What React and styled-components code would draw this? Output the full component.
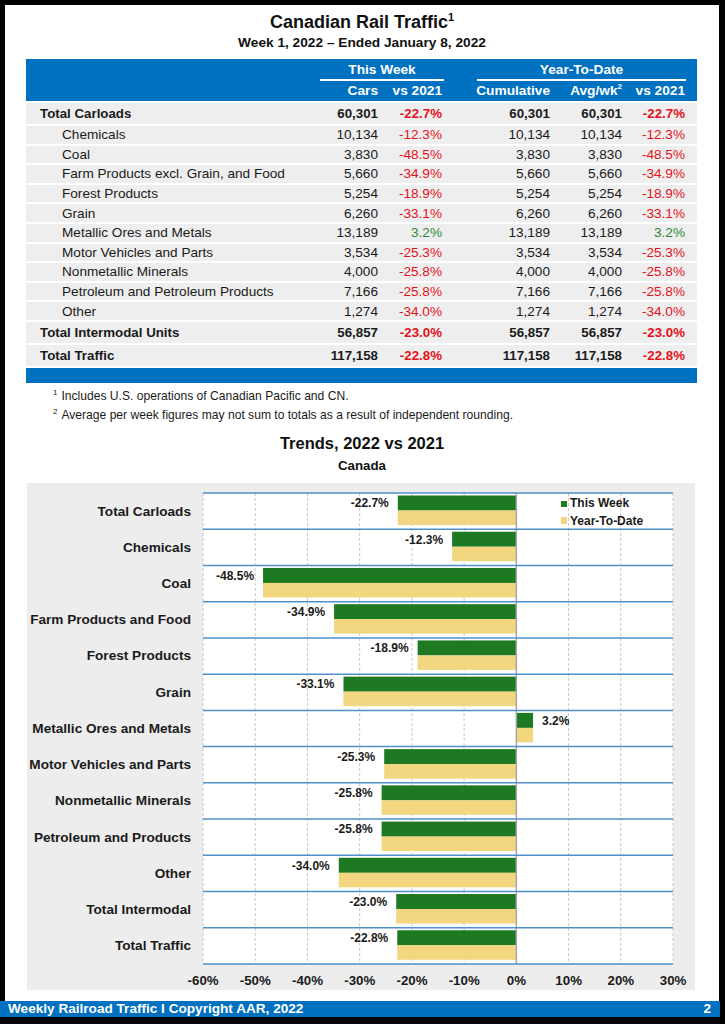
import styled, { createGlobalStyle } from 'styled-components'

const FONT = `"Liberation Sans", Arial, Helvetica, sans-serif`
const BLUE = '#0070c0'
const RED = '#e3121b'
const GREEN_TXT = '#2e8b3a'
const BAR_GREEN = '#1d7a22'
const BAR_YELLOW = '#f2d680'
const COLS = '292px 60px 64px 28px 80px 72px 63px 12px'

const GlobalStyle = createGlobalStyle`
  *, *::before, *::after { box-sizing: border-box; }
  html, body { margin: 0; padding: 0; background: #000; }
  body { font-family: ${FONT}; color: #1a1a1a; }
`

const Page = styled.div`
  width: 725px;
  height: 1024px;
  background: #000;
  padding-top: 5px;
  display: flex;
  flex-direction: column;
`

const Sheet = styled.div`
  flex: 1;
  margin: 0 6px 0 5px;
  background: #fff;
  padding-top: 7px;
  display: flex;
  flex-direction: column;
`

const Title = styled.h1`
  margin: 0;
  font-size: 18px;
  line-height: 20px;
  font-weight: 700;
  text-align: center;
  color: #111;

  sup {
    font-size: 11px;
    line-height: 0;
    vertical-align: 7px;
  }
`

const Subtitle = styled.h2`
  margin: 3px 0 0;
  font-size: 13.7px;
  line-height: 16px;
  font-weight: 700;
  text-align: center;
  color: #111;
`

const Table = styled.div`
  margin: 8px 0 0 21px;
  width: 671px;
  display: flex;
  flex-direction: column;
  gap: 2px;
`

const TableHead = styled.div`
  background: ${BLUE};
  color: #fff;
  height: 42px;
  padding-top: 2px;
  display: grid;
  grid-template-columns: ${COLS};
  grid-template-rows: 20px 20px;
  font-size: 13.7px;
  font-weight: 700;

  sup {
    font-size: 8px;
    line-height: 0;
    vertical-align: 6px;
  }
`

const GroupHead = styled.div`
  grid-row: 1;
  grid-column: ${p => p.$span};
  margin: ${p => p.$inset};
  text-align: center;
  line-height: 18px;
  border-bottom: 2px solid #fff;
`

const ColHead = styled.div`
  grid-row: 2;
  grid-column: ${p => p.$col};
  text-align: right;
  line-height: 20px;
  white-space: nowrap;
`

const Row = styled.div`
  height: ${p => (p.$total ? '21px' : '17.6px')};
  background: #eeeeee;
  display: grid;
  grid-template-columns: ${COLS};
  align-items: center;
  font-size: ${p => (p.$total ? '13.3px' : '13.6px')};
  font-weight: ${p => (p.$total ? 700 : 400)};
  white-space: nowrap;
`

const Label = styled.div`
  padding-left: ${p => (p.$total ? '14px' : '36px')};
`

const Num = styled.div`
  grid-column: ${p => p.$col};
  text-align: right;
`

const Pct = styled(Num)`
  color: ${p => (p.$neg ? RED : GREEN_TXT)};
`

const TableFoot = styled.div`
  height: 15px;
  background: ${BLUE};
`

const Notes = styled.div`
  margin-top: 4px;
  padding-left: 48px;
  font-size: 12.1px;
  line-height: 19px;
  color: #1a1a1a;

  sup {
    font-size: 8px;
    line-height: 0;
    vertical-align: 5px;
    margin-right: 4px;
  }
`

const ChartTitle = styled.h2`
  margin: 8px 0 0;
  font-size: 16.5px;
  line-height: 20px;
  font-weight: 700;
  text-align: center;
  color: #111;
`

const ChartSub = styled.h3`
  margin: 5px 0 0;
  font-size: 13.3px;
  line-height: 16px;
  font-weight: 700;
  text-align: center;
  color: #111;
`

const ChartBox = styled.div`
  margin: 9px 0 0 22px;
  width: 668px;
  height: 507px;
  background: #ededed;
  padding-top: 10px;
`

const ChartBody = styled.div`
  display: grid;
  grid-template-columns: 176px 470px;
`

const CatList = styled.div`
  height: 471px;
  display: grid;
  grid-template-rows: repeat(13, 1fr);
`

const Cat = styled.div`
  display: flex;
  align-items: center;
  justify-content: flex-end;
  padding-right: 12px;
  font-size: 13.6px;
  font-weight: 700;
  white-space: nowrap;
  color: #1a1a1a;
`

const Plot = styled.svg`
  display: block;
  overflow: visible;

  text {
    font-family: ${FONT};
    font-weight: 700;
    font-size: 12px;
    fill: #1a1a1a;
  }
`

const Ticks = styled.div`
  margin: 8px 0 0 150px;
  display: grid;
  grid-template-columns: repeat(10, 52.222px);
`

const Tick = styled.div`
  text-align: center;
  font-size: 13.3px;
  line-height: 18px;
  font-weight: 700;
  color: #1a1a1a;
`

const Footer = styled.div`
  height: 16px;
  margin: 0 5px 7px 0;
  background: ${BLUE};
  color: #fff;
  display: flex;
  justify-content: space-between;
  align-items: center;
  padding: 0 9px 0 8px;
  font-size: 13.6px;
  line-height: 16px;
  font-weight: 700;
`

const rows = [
  { label: 'Total Carloads', total: true, cars: '60,301', pct: '-22.7%' },
  { label: 'Chemicals', cars: '10,134', pct: '-12.3%' },
  { label: 'Coal', cars: '3,830', pct: '-48.5%' },
  { label: 'Farm Products excl. Grain, and Food', cars: '5,660', pct: '-34.9%' },
  { label: 'Forest Products', cars: '5,254', pct: '-18.9%' },
  { label: 'Grain', cars: '6,260', pct: '-33.1%' },
  { label: 'Metallic Ores and Metals', cars: '13,189', pct: '3.2%' },
  { label: 'Motor Vehicles and Parts', cars: '3,534', pct: '-25.3%' },
  { label: 'Nonmetallic Minerals', cars: '4,000', pct: '-25.8%' },
  { label: 'Petroleum and Petroleum Products', cars: '7,166', pct: '-25.8%' },
  { label: 'Other', cars: '1,274', pct: '-34.0%' },
  { label: 'Total Intermodal Units', total: true, cars: '56,857', pct: '-23.0%' },
  { label: 'Total Traffic', total: true, cars: '117,158', pct: '-22.8%' },
]

const trends = [
  ['Total Carloads', -22.7],
  ['Chemicals', -12.3],
  ['Coal', -48.5],
  ['Farm Products and Food', -34.9],
  ['Forest Products', -18.9],
  ['Grain', -33.1],
  ['Metallic Ores and Metals', 3.2],
  ['Motor Vehicles and Parts', -25.3],
  ['Nonmetallic Minerals', -25.8],
  ['Petroleum and Products', -25.8],
  ['Other', -34.0],
  ['Total Intermodal', -23.0],
  ['Total Traffic', -22.8],
]

const W = 470
const H = 471
const BH = H / 13
const ticks = [-60, -50, -40, -30, -20, -10, 0, 10, 20, 30]
const xOf = v => ((v + 60) * W) / 90

function TrendPlot() {
  const zero = xOf(0)
  return (
    <Plot width={W} height={H}>
      <rect width={W} height={H} fill="#fff" />
      {ticks.filter(t => t !== 0).map(t => (
        <line key={t} x1={xOf(t)} x2={xOf(t)} y1={0} y2={H} stroke="#c8c8c8" strokeDasharray="3 2" />
      ))}
      {trends.map(([name, v], i) => {
        const top = i * BH
        const x = Math.min(zero, xOf(v))
        const w = Math.abs(xOf(v) - zero)
        return (
          <g key={name}>
            <rect x={x} y={top + 2.5} width={w} height={15} fill={BAR_GREEN} />
            <rect x={x} y={top + 17.5} width={w} height={14.5} fill={BAR_YELLOW} />
          </g>
        )
      })}
      <line x1={zero} x2={zero} y1={0} y2={H} stroke="#a6a6a6" strokeWidth={1.5} />
      {Array.from({ length: 14 }, (_, i) => (
        <line key={i} x1={0} x2={W} y1={i * BH} y2={i * BH} stroke="#4f8fcc" strokeWidth={1.5} />
      ))}
      {trends.map(([name, v], i) => {
        const top = i * BH
        const neg = v < 0
        return (
          <text
            key={name}
            x={neg ? xOf(v) - 9 : xOf(v) + 9}
            y={top + 14.3}
            textAnchor={neg ? 'end' : 'start'}
          >
            {v.toFixed(1)}%
          </text>
        )
      })}
      <rect x={358} y={8} width={6} height={6} fill={BAR_GREEN} />
      <text x={367} y={14.3}>This Week</text>
      <rect x={358} y={24} width={6} height={7} fill={BAR_YELLOW} />
      <text x={367} y={32}>Year-To-Date</text>
    </Plot>
  )
}

export default function App() {
  return (
    <Page>
      <GlobalStyle />
      <Sheet>
        <Title>Canadian Rail Traffic<sup>1</sup></Title>
        <Subtitle>Week 1, 2022 – Ended January 8, 2022</Subtitle>

        <Table>
          <TableHead>
            <GroupHead $span="2 / 4" $inset="0 -2px 0 2px">This Week</GroupHead>
            <GroupHead $span="5 / 8" $inset="0 -1px 0 7px">Year-To-Date</GroupHead>
            <ColHead $col={2}>Cars</ColHead>
            <ColHead $col={3}>vs 2021</ColHead>
            <ColHead $col={5}>Cumulative</ColHead>
            <ColHead $col={6}>Avg/wk<sup>2</sup></ColHead>
            <ColHead $col={7}>vs 2021</ColHead>
          </TableHead>
          {rows.map(r => {
            const neg = r.pct.startsWith('-')
            return (
              <Row key={r.label} $total={r.total}>
                <Label $total={r.total}>{r.label}</Label>
                <Num $col={2}>{r.cars}</Num>
                <Pct $col={3} $neg={neg}>{r.pct}</Pct>
                <Num $col={5}>{r.cars}</Num>
                <Num $col={6}>{r.cars}</Num>
                <Pct $col={7} $neg={neg}>{r.pct}</Pct>
              </Row>
            )
          })}
          <TableFoot />
        </Table>

        <Notes>
          <div><sup>1</sup>Includes U.S. operations of Canadian Pacific and CN.</div>
          <div><sup>2</sup>Average per week figures may not sum to totals as a result of independent rounding.</div>
        </Notes>

        <ChartTitle>Trends, 2022 vs 2021</ChartTitle>
        <ChartSub>Canada</ChartSub>

        <ChartBox>
          <ChartBody>
            <CatList>
              {trends.map(([name]) => (
                <Cat key={name}>{name}</Cat>
              ))}
            </CatList>
            <TrendPlot />
          </ChartBody>
          <Ticks>
            {ticks.map(t => (
              <Tick key={t}>{t}%</Tick>
            ))}
          </Ticks>
        </ChartBox>
      </Sheet>
      <Footer>
        <span>Weekly Railroad Traffic I Copyright AAR, 2022</span>
        <span>2</span>
      </Footer>
    </Page>
  )
}
